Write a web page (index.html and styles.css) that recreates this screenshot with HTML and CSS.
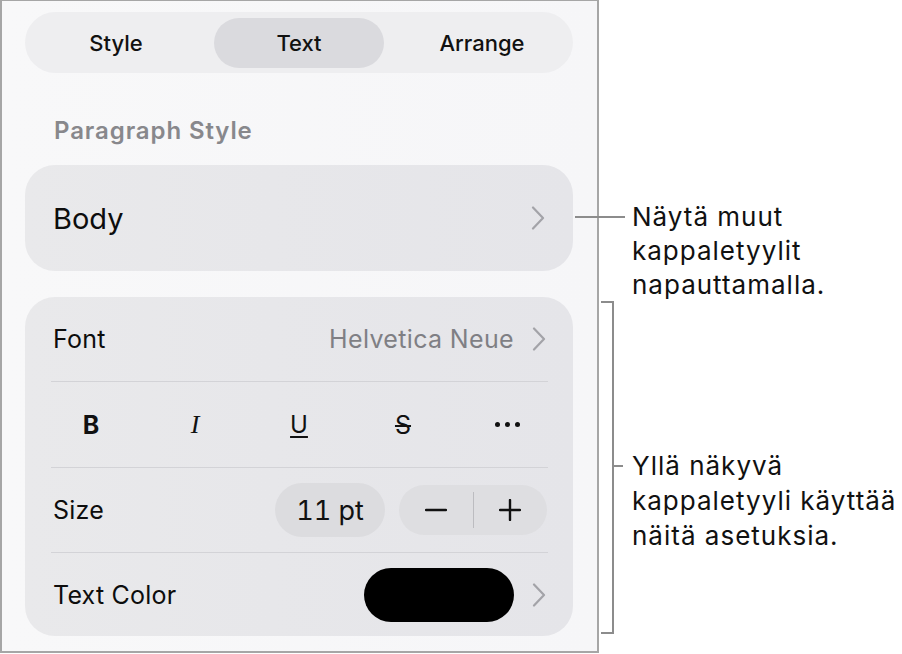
FILE: index.html
```html
<!DOCTYPE html>
<html lang="fi">
<head>
<meta charset="utf-8">
<title>Text format</title>
<link rel="stylesheet" href="styles.css">
</head>
<body>
<div class="stage">
  <div class="panel">
    <div class="segmented">
      <div class="seg">Style</div>
      <div class="seg"><span class="seg-on">Text</span></div>
      <div class="seg">Arrange</div>
    </div>
    <div class="section-label">Paragraph Style</div>
    <div class="card body-card">
      <span class="body-text">Body</span>
      <svg class="chev" width="14" height="24" viewBox="0 0 14 24"><path d="M2 1.5 L12 12 L2 22.5" fill="none" stroke="#a3a3a8" stroke-width="2.2" stroke-linecap="round" stroke-linejoin="round"/></svg>
    </div>
    <div class="card list-card">
      <div class="row">
        <span class="label">Font</span>
        <span class="row-right"><span class="value">Helvetica Neue</span>
        <svg class="chev" width="14" height="24" viewBox="0 0 14 24"><path d="M2 1.5 L12 12 L2 22.5" fill="none" stroke="#a3a3a8" stroke-width="2.2" stroke-linecap="round" stroke-linejoin="round"/></svg></span>
      </div>
      <div class="sep"></div>
      <div class="row fmt-row">
        <span class="fmt fmt-b">B</span>
        <span class="fmt fmt-i">I</span>
        <span class="fmt fmt-u">U</span>
        <span class="fmt fmt-s">S</span>
        <span class="fmt fmt-more"><i></i><i></i><i></i></span>
      </div>
      <div class="sep"></div>
      <div class="row">
        <span class="label">Size</span>
        <span class="row-right size-ctrls">
          <span class="size-pill">11 pt</span>
          <span class="stepper">
            <span class="step"><svg width="22" height="22" viewBox="0 0 22 22"><path d="M1 11 H21" stroke="#111" stroke-width="2.4" stroke-linecap="round"/></svg></span>
            <span class="step-div"></span>
            <span class="step"><svg width="22" height="22" viewBox="0 0 22 22"><path d="M1 11 H21 M11 1 V21" stroke="#111" stroke-width="2.4" stroke-linecap="round"/></svg></span>
          </span>
        </span>
      </div>
      <div class="sep"></div>
      <div class="row">
        <span class="label">Text Color</span>
        <span class="row-right"><span class="swatch"></span>
        <svg class="chev" width="14" height="24" viewBox="0 0 14 24"><path d="M2 1.5 L12 12 L2 22.5" fill="none" stroke="#a3a3a8" stroke-width="2.2" stroke-linecap="round" stroke-linejoin="round"/></svg></span>
      </div>
    </div>
  </div>
  <div class="notes">
    <p class="note note-1">Näytä muut<br>kappaletyylit<br>napauttamalla.</p>
    <p class="note note-2">Yllä näkyvä<br>kappaletyyli käyttää<br>näitä asetuksia.</p>
  </div>
  <div class="leader leader-1"></div>
  <div class="bracket"></div>
  <div class="leader leader-2"></div>
</div>
</body>
</html>
```

FILE: styles.css
```css
* { box-sizing: border-box; }
html, body {
  margin: 0;
  padding: 0;
  background: #ffffff;
}
body {
  font-family: Inter, "Noto Sans", sans-serif;
  color: #111;
}
.stage {
  position: relative;
  width: 902px;
  height: 654px;
  display: flex;
  align-items: flex-start;
}
.panel {
  width: 599px;
  height: 653px;
  border-style: solid;
  border-color: #a6a6a6;
  border-width: 1px 2px 2px 2px;
  background: linear-gradient(90deg, #f8f8f9 0%, #f6f6f8 100%);
  padding: 11px 0 0 23px;
}
.segmented {
  width: 548px;
  height: 61px;
  border-radius: 31px;
  background: #eeeef0;
  display: grid;
  grid-template-columns: 182px 184px 182px;
  align-items: center;
}
.seg {
  display: flex;
  justify-content: center;
  align-items: center;
  font-size: 22px;
  font-weight: 500;
  color: #111;
}
.seg-on {
  width: 170px;
  height: 50px;
  border-radius: 25px;
  background: #dadade;
  display: flex;
  justify-content: center;
  align-items: center;
}
.section-label {
  margin: 43px 0 0 29px;
  height: 49px;
  font-size: 24px;
  line-height: 30px;
  font-weight: 600;
  letter-spacing: 0.9px;
  color: #88888c;
}
.card {
  width: 548px;
  background: linear-gradient(90deg, #e9e9eb 0%, #e7e7ea 45%, #e5e5e9 100%);
  border-radius: 30px;
}
.body-card {
  height: 106px;
  display: flex;
  align-items: center;
  justify-content: space-between;
  padding: 0 28px 0 28px;
}
.body-text {
  font-size: 29px;
  color: #0d0d0d;
}
.chev { display: block; flex: none; }
.list-card {
  margin-top: 26px;
  height: 339px;
  padding: 0;
}
.row {
  height: 84px;
  display: flex;
  align-items: center;
  justify-content: space-between;
  padding: 0 27px 0 28px;
}
.sep {
  height: 1px;
  margin: 0 25px 0 26px;
  background: #d3d3d7;
}
.label {
  font-size: 25px;
  letter-spacing: 0.2px;
  color: #0d0d0d;
}
.row-right {
  display: flex;
  align-items: center;
}
.value {
  font-size: 25px;
  letter-spacing: 0.35px;
  color: #7f7f84;
  margin-right: 18px;
}
.fmt-row {
  display: grid;
  grid-template-columns: repeat(5, 104px);
  padding: 0 14px;
  justify-items: center;
  height: 85px;
}
.fmt {
  font-size: 23px;
  line-height: 30px;
  color: #111;
}
.fmt-b { font-weight: 700; font-size: 25px; }
.fmt-i {
  font-family: "Liberation Serif", serif;
  font-style: italic;
  font-size: 26px;
}
.fmt-u {
  font-size: 24px;
  text-decoration: underline;
  text-decoration-thickness: 2px;
  text-underline-offset: 3px;
}
.fmt-s {
  font-size: 25px;
  text-decoration: line-through;
  text-decoration-thickness: 2px;
}
.fmt-more {
  display: flex;
  gap: 5px;
  align-items: center;
  height: 30px;
}
.fmt-more i {
  width: 5px;
  height: 5px;
  border-radius: 50%;
  background: #111;
}
.size-ctrls { gap: 14px; margin-right: -1px; }
.size-pill {
  width: 110px;
  height: 54px;
  border-radius: 27px;
  background: #dcdcdf;
  font-size: 27px;
  font-variant-numeric: tabular-nums;
  display: flex;
  align-items: center;
  justify-content: center;
  color: #111;
}
.stepper {
  width: 148px;
  height: 50px;
  border-radius: 25px;
  background: #dedee1;
  display: flex;
  align-items: center;
}
.step {
  flex: 1;
  display: flex;
  justify-content: center;
  align-items: center;
}
.step-div {
  width: 1px;
  height: 36px;
  background: #bcbcc0;
}
.swatch {
  width: 150px;
  height: 54px;
  border-radius: 27px;
  background: #000;
  margin-right: 18px;
}
.notes {
  padding-left: 33px;
  padding-top: 200px;
}
.note {
  margin: 0;
  font-size: 26px;
  line-height: 34px;
  letter-spacing: 1px;
  color: #111;
  white-space: nowrap;
}
.note-2 {
  margin-top: 146px;
  line-height: 35px;
}
.leader {
  position: absolute;
  height: 2px;
  background: #8c8c8c;
}
.leader-1 {
  left: 575px;
  top: 216px;
  width: 50px;
}
.leader-2 {
  left: 613px;
  top: 465px;
  width: 10px;
}
.bracket {
  position: absolute;
  left: 601px;
  top: 301px;
  width: 13px;
  height: 333px;
  border: 2px solid #8c8c8c;
  border-left: 0;
}
```
